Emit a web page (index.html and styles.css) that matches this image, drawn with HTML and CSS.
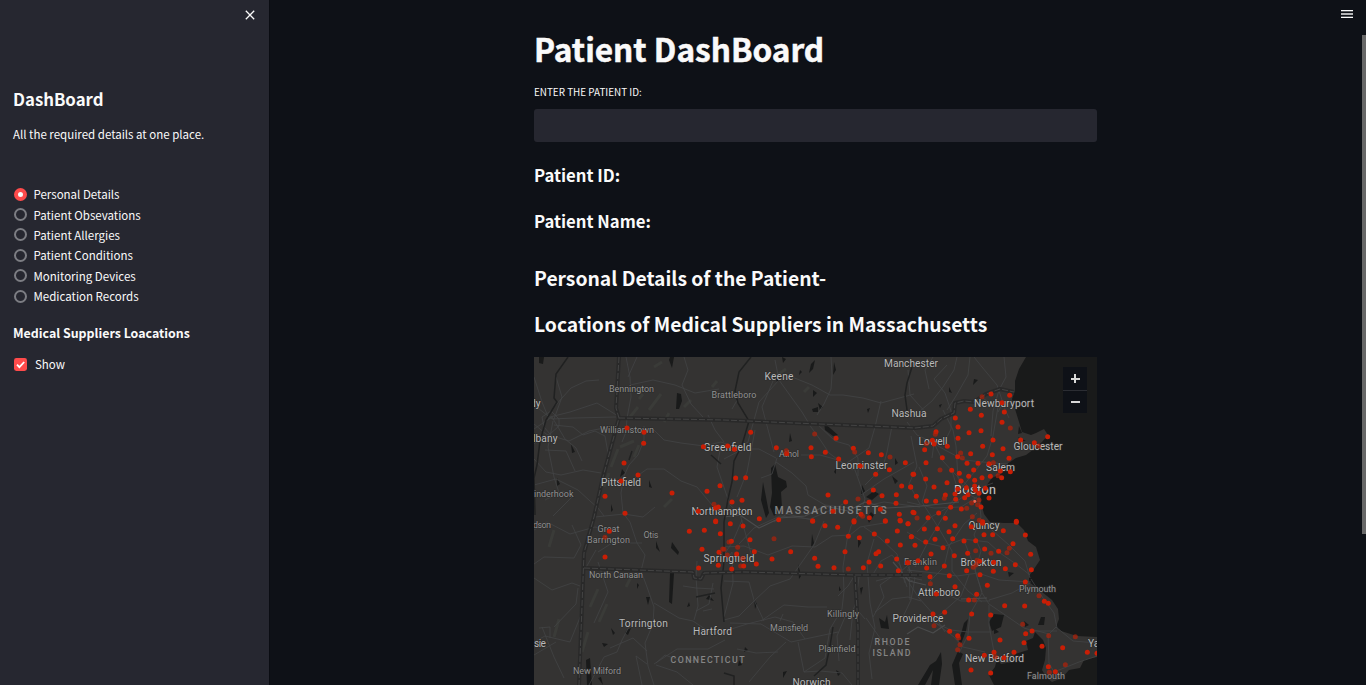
FILE: index.html
```
<!DOCTYPE html>
<html lang="en">
<head>
<meta charset="utf-8">
<title>Patient DashBoard</title>
<link rel="stylesheet" href="styles.css">
</head>
<body>
<div class="app">
  <aside class="sidebar">
    <div class="sidebar-top">
      <svg class="close" viewBox="0 0 10 10"><path d="M.8.8l8.4 8.4M9.2.8L.8 9.2"/></svg>
    </div>
    <h3 class="side-title">DashBoard</h3>
    <p class="side-text">All the required details at one place.</p>
    <div class="radios">
      <label class="radio"><i class="dot on"></i><span>Personal Details</span></label>
      <label class="radio"><i class="dot"></i><span>Patient Obsevations</span></label>
      <label class="radio"><i class="dot"></i><span>Patient Allergies</span></label>
      <label class="radio"><i class="dot"></i><span>Patient Conditions</span></label>
      <label class="radio"><i class="dot"></i><span>Monitoring Devices</span></label>
      <label class="radio"><i class="dot"></i><span>Medication Records</span></label>
    </div>
    <h5 class="side-sub">Medical Suppliers Loacations</h5>
    <label class="check"><svg viewBox="0 0 13 13"><rect width="13" height="13" rx="2.4" fill="#ff4b4b"/><path d="M3 6.6l2.4 2.5L10.2 4"/></svg><span>Show</span></label>
  </aside>
  <main class="main">
    <svg class="menu" viewBox="0 0 12 8"><path d="M0 .5h12M0 7.5h12" stroke="#fafafa"/><path d="M0 4h12" stroke="#b4b5b7" stroke-width="2"/><path d="M0 1.5h12M0 6.5h12" stroke="#55585c"/></svg>
    <div class="column">
      <h1 class="title">Patient DashBoard</h1>
      <label class="field-label">ENTER THE PATIENT ID:</label>
      <div class="field"></div>
      <h3 class="line">Patient ID:</h3>
      <h3 class="line">Patient Name:</h3>
      <h2 class="head first">Personal Details of the Patient-</h2>
      <h2 class="head second">Locations of Medical Suppliers in Massachusetts</h2>
      <div class="map">
        <svg class="map-svg" width="563" height="328" viewBox="0 0 563 328">
          <rect width="563" height="328" fill="#343332"/>
          <g class="patches">
            <path d="M105 42l4-5M96 60l8-10M115 53l12-16M86 90l14-6M90 70l9 3M77 110l7-18M120 10l8-5M100 100l5-12M130 65l5-9M70 130l5-14M178 30l5-6M240 20l12-8M270 35l5-5M56 250l8-18M65 265l8-18M48 295l6-20M92 230l6-12M20 280l5-18M15 190l5-17M130 150l8-8M150 50l7-7"/>
          </g>
          <path class="sea" d="M492 0L485 12 481 24 481 34 478 42 481 52 485 65 488 75 497 78 502 76 510 72 514 78 508 85 500 92 492 98 482 101 473 107 468 116 458 121 452 129 446 137 447 145 450 157 456 165 470 166 483 166 490 173 494 184 502 190 506 203 500 212 495 219 495 225 508 235 518 243 524 252 525 262 522 270 527 274 543 279 563 280V0z"/>
          <path class="sea" d="M563 300L550 303 546 311 535 313 528 321 518 325 512 320 508 313 511 303 512 291 509 283 501 275 499 281 492 284 494 293 481 297 478 305 467 307 463 302 461 310 455 318 460 328H563z"/>
          <path class="sea" d="M424 294l5 3-4 9 3 22h-7l-3-20zM402 304l5-9 1 12-3 21h-8l2-15-8 15h-7l12-20zM434 262l-2 12-5 13-2-3 5-18zM460 257l10 1-3 12-9 4-3-9z"/>
          <path class="water" d="M237 111l4-4 3 13 8 4 1 6-6 5 1 16-8 8-4-9 2-14zM229 125l3 15 3 16-3 5-5-18zM136 0l4 0-2 11-3-8zM143 36l4 1 1 7-3 8h-3zM5 0h5l-1 7-4-1zM242 22l4-5 2 5-5 3zM277 7l4-4-2 9-4 4zM248 0l4 2-3 4zM300 5l2 8-3 5zM266 13l2 2-3 3zM278 52l6-2 0 5-5 0zM279 33l4 3-4 4zM284 46l5 4-3 3zM290 66l6 5 8 7-5 1-8-6zM256 76l2 8-3 1zM340 134l5 3-7 6-6-3zM358 119l6 5-3 3zM328 128l3 6-4 5zM337 155l3 3-5 8-2-5zM37 87l4 8-3 1zM23 121l3 6-3 2zM115 123l3 8-3-1zM77 147l2 6-2 2zM88 112l3 4-5 4zM122 184l4 11-4-4zM138 185l7 10-1 3-7-7zM136 216l4 0-2 31-3-2zM112 240l4 0-2 8zM103 226l2 2-2 4zM93 273l4-2-3 7-3-2zM77 271l4 5-2 2zM68 286l6 1-4 3zM175 238l5 6-8-2zM52 303l4-2 2 27h-5zM64 321l3-1 2 8zM220 242l3 5-2 5zM264 207l3 12-2 3zM278 177l2 9-3 5zM345 261l6 4 2-7 2 14-8-1zM326 231l3-1-2 8zM305 229l2 4-2 1zM302 313l5 3-3 3zM238 298l2 5zM324 178l3 8-3 5zM415 30l3 6-3-1zM440 22l4 1-5 5zM405 48l3-1-2 4zM485 69l3 7-4 1zM484 80l8 4-5 0zM507 260l4 0-1 8-6 0zM490 264l5 4-4 2zM474 215l6 1-5 4zM333 52l3-1-2 5zM361 101l3 5-3 2zM300 115l2-4 0 6zM211 290l3 3-4 2zM249 315l4-1-4 7zM205 303l3 5-4 1zM155 245l-2 5 3-1zM460 271l5 4-5 2z"/>
          <path class="roads" d="M20 50L37 31 52 24 65 23M20 62L28 40 22 20M0 48L18 62 40 61 82 60M0 72L18 60 31 82 42 91 48 104M0 67L12 77 35 84 55 74 75 70M15 62L8 45 0 20M19 64L14 90 20 120 26 139M16 60L36 55 63 46 84 59M25 69L16 77 10 70 8 60 17 54 25 62zM9 75L0 87M20 68L39 70 49 78 61 74 71 79 74 96 71 117M0 102L12 115 27 118 49 113 67 116M0 128L22 122 44 133 56 144 64 151 70 159M11 93L32 94 41 114M19 159L38 140 29 134 11 143M92 0L96 20 97 40 93 61 92 75 88 85M96 28L119 23 141 28 161 36 185 32M94 20L103 0M110 69L110 83 104 98 95 108 90 119 87 136 89 156 96 165 103 186 111 198 107 214 113 230 120 250 119 267 111 286 114 309 120 328M120 73L130 83 147 86 170 89 187 85 203 91 214 85 217 74 225 45 245 23 241 3M95 125L113 112 130 112 147 124 163 130 178 148 190 158M150 0L154 13 148 28 157 47 169 60M0 173L13 165 36 177 61 170 84 175M61 160L90 157 109 160 121 150M64 195L78 186 108 186M38 168L47 188 40 201 10 200 0 207M0 221L18 233 38 226 46 229M47 258L36 285 11 279 0 285M8 270L20 300 30 321M0 298L22 285M5 271L16 270 16 281M44 231L42 247 20 270M50 214L62 193M64 205L74 235 60 266M120 246L145 261 159 264 177 276 193 276M118 267L98 264 88 283 83 295 70 300 55 328M113 294L99 281 76 291M113 307L102 299 108 328M120 307L143 292 174 292 191 283M122 308L143 315 159 328M122 306L131 298 150 305 166 302M163 204L162 220 164 249 160 263M149 229L162 231 180 232M179 226L175 247 162 254M169 254L178 252M190 207L198 195 199 226 190 260M187 88L183 110 196 148 206 157 218 200M221 73L213 115 203 140M190 85L181 73 174 58M198 52L205 40M239 24L228 50 240 95M208 163L199 184 190 198M190 224L215 225 220 243 230 264M190 263L205 259 221 243 236 229 256 222 280 188 290 164M191 274L213 267 241 260 259 265 271 282M196 266L227 267 257 285 304 275M190 190L210 189 234 198 258 189 281 190 298 179 316 178 326 170 350 166M205 187L220 171 246 159 276 162 297 153 309 147M240 165L253 157 278 163M245 23L255 37 268 55 277 70 285 81 295 96 303 102 319 113M245 23L258 20 278 28 296 38 309 38 329 41 347 46 380 37M297 0L298 18 297 32 290 47 283 58M281 65L301 84 315 88 324 101 324 119M347 44L341 70 335 91 310 108M374 13L376 38 393 57M358 69L353 95 350 106 339 120 331 128M190 102L209 92 225 92 242 101M243 101L238 117 227 121M242 105L258 116 272 129 274 138 291 148 316 151M267 98L286 98 304 103 321 113 326 127 331 142 327 154 317 169 313 183 309 210 310 234 308 252 296 272 291 301 270 315M327 138L350 122 380 105M327 150L350 145 386 150M386 54L398 44 409 30 420 13 423 0M413 8L400 22 411 36 417 54 417 72 412 82M436 0L434 18 422 39 413 53M440 0L448 10 463 28 471 52 475 61M399 0L391 13 395 32M470 0L472 20 465 33 459 54 457 79M373 65L383 78 400 86 398 101M450 42L464 50 459 79 453 99 441 114 426 133M470 44L464 55M409 53L419 73 422 89 424 121 434 138M400 86L409 104 421 117 434 129M399 86L411 93 430 103 449 105 474 107M377 79L383 109 375 127 386 147M385 110L393 129 388 145M373 145L400 151 427 150 443 140M425 136L413 151 397 160 383 175M443 142L423 130 417 111M445 142L447 160 440 178 447 194 441 214 448 235M447 162L459 174 475 188 491 204 496 221M459 126L437 134 415 150 395 183 381 210M373 175L389 185 409 190 429 182 454 185 466 196 482 207 496 218M388 145L404 170 418 194 418 214 434 234 448 245M443 156L430 167 415 189 410 210 396 224M373 213L401 216 423 219 444 216 465 223 497 225M429 181L440 209 448 236 455 247 477 262 490 271 500 274 523 274M496 226L478 236 455 243M455 248L455 268 460 295M456 244L427 244 412 237M448 236L436 257 434 278 425 296M497 222L509 241 520 256 523 271M500 273L515 277 522 270 539 284 563 286M514 276L515 306 520 315 545 305 563 299M399 265L417 273 434 275 457 275M399 264L420 280 429 290 451 295M400 263L427 239 435 218M375 226L385 241 400 258 411 275M341 255L358 242 374 240 387 244M374 210L381 221 377 243 366 266M339 260L350 240 346 228 360 218 379 224M316 283L319 253 324 241M304 239L314 229 319 221M311 260L303 279 305 304M227 264L250 248 274 250 293 250M246 264L249 257M252 285L236 300 215 325M264 285L270 315 286 314 308 316 318 328M203 292L222 296 244 295M331 262L321 250 325 220M332 261L346 281 360 292M338 219L347 204 358 198 366 208 373 230M342 224L365 218 388 223M375 202L376 243M379 204L366 215 352 220M340 182L333 206 336 246 341 271 335 296 338 322M330 170L346 181 363 197 371 226"/>
          <path class="roads major" d="M190 160L206 158 225 171 246 161 271 159 291 149 314 154 331 145 353 151 388 149 425 145M373 277L384 270 399 276 411 268M427 242L453 241M359 205L375 224 392 228"/>
          <path class="rivers" d="M34 0L22 17 20 41 23 45 12 63 6 84 3 108 0 121 1 158M217 0L205 15 201 34 204 46 215 64 208 88 200 104 198 125 194 142 190 165 190 205 187 231 190 265M378 10L373 26 371 38 374 60M162 240L181 236M299 270L296 289 292 308 280 319M190 316L200 319 200 328M98 94L95 103M177 98L187 107"/>
          <g class="border">
            <path d="M85 0L82 51 85 61 69 120 60 160 50 196 45 328M85 61L190 63 260 66 335 69 381 71 399 69 407 62 420 56 421 46 430 44 440 45 452 37 466 32 480 35M50 211L130 214 159 215 160 221 167 222 170 216 210 215 321 218 388 218M321 219L324 270 324 328"/>
            <path class="inner" d="M85 0L82 51 85 61 69 120 60 160 50 196 45 328M85 61L190 63 260 66 335 69 381 71 399 69 407 62 420 56 421 46 430 44 440 45 452 37 466 32 480 35M50 211L130 214 159 215 160 221 167 222 170 216 210 215 321 218 388 218M321 219L324 270 324 328"/>
          </g>
          <g class="names">
            <text x="350" y="9.5" textLength="54">Manchester</text>
            <text x="230.500" y="23" textLength="29">Keene</text>
            <text x="357.500" y="59.500" textLength="35">Nashua</text>
            <text x="440" y="49.500" textLength="60">Newburyport</text>
            <text x="-4" y="49.500">dy</text>
            <text x="-1" y="85" textLength="24.500">lbany</text>
            <text x="169.500" y="94" textLength="48">Greenfield</text>
            <text x="384.500" y="88" textLength="29">Lowell</text>
            <text x="479.500" y="92.500" textLength="49">Gloucester</text>
            <text x="301.500" y="112" textLength="52">Leominster</text>
            <text x="452" y="113.500" textLength="29">Salem</text>
            <text x="67" y="128.500" textLength="40">Pittsfield</text>
            <text x="157.500" y="157.500" textLength="61">Northampton</text>
            <text x="434.500" y="172" textLength="31">Quincy</text>
            <text x="169.500" y="204.500" textLength="51">Springfield</text>
            <text x="426.500" y="208.500" textLength="41">Brockton</text>
            <text x="384" y="238.500" textLength="42">Attleboro</text>
            <text x="358.500" y="264.500" textLength="51">Providence</text>
            <text x="85" y="269.500" textLength="49">Torrington</text>
            <text x="159" y="277.500" textLength="39">Hartford</text>
            <text x="431" y="305" textLength="59">New Bedford</text>
            <text x="258.500" y="328.500" textLength="38">Norwich</text>
            <text x="0" y="290" textLength="12">sie</text>
            <text x="554" y="290">Ya</text>
            <text x="420" y="137" class="big" textLength="42">Boston</text>
          </g>
          <g class="names small">
            <text x="75" y="34.500" textLength="45">Bennington</text>
            <text x="177.500" y="40.500" textLength="45">Brattleboro</text>
            <text x="66" y="76" textLength="54">Williamstown</text>
            <text x="245" y="99.500" textLength="20">Athol</text>
            <text x="0" y="140" textLength="39.500">inderhook</text>
            <text x="-1" y="171" textLength="18">dson</text>
            <text x="63.500" y="174.500" textLength="22">Great</text>
            <text x="53" y="185.500" textLength="43">Barrington</text>
            <text x="109.500" y="180.500" textLength="15">Otis</text>
            <text x="55" y="220.500" textLength="54">North Canaan</text>
            <text x="370" y="207.500" textLength="33">Franklin</text>
            <text x="485" y="234.500" textLength="37">Plymouth</text>
            <text x="293" y="259.500" textLength="32">Killingly</text>
            <text x="236" y="273.500" textLength="38">Mansfield</text>
            <text x="284.500" y="295" textLength="37">Plainfield</text>
            <text x="39" y="316.500" textLength="48">New Milford</text>
            <text x="493" y="322" textLength="38">Falmouth</text>
          </g>
          <g class="states">
            <text x="240.500" y="156.500" textLength="112" font-size="10.500">MASSACHUSETTS</text>
            <text x="136.500" y="306" textLength="74">CONNECTICUT</text>
            <text x="340.500" y="287.500" textLength="35">RHODE</text>
            <text x="338.500" y="298.500" textLength="38">ISLAND</text>
          </g>
          <g id="pins"></g>
        </svg>
        <div class="zoom"><b class="plus"></b><b class="minus"></b></div>
      </div>
    </div>
    <div class="scrollbar"></div>
  </main>
</div>
<script src="map.js"></script>
</body>
</html>
```
FILE: styles.css
```
* { box-sizing: border-box; }
body {
  margin: 0;
  background: #0e1117;
  color: #fafafa;
  font-family: "Noto Sans CJK SC", "Noto Sans", sans-serif;
  overflow: hidden;
}
h1, h2, h3, h5, p { margin: 0; white-space: nowrap; }
.app { display: flex; height: 685px; }
.sidebar {
  width: 269px;
  flex: none;
  background: #262730;
  padding: 0 13px;
  font-size: 11.5px;
}
.sidebar-top { display: flex; justify-content: flex-end; height: 88px; padding: 10px 1px 0 0; }
.close { width: 10px; height: 10px; stroke: #fafafa; stroke-width: 1.3; fill: none; }
.side-title { font-size: 16.8px; line-height: 22px; height: 37px; }
.side-text { line-height: 18px; height: 59px; }
.radios { display: flex; flex-direction: column; }
.radio { display: flex; align-items: center; height: 20.4px; gap: 6.5px; white-space: nowrap; padding-left: 1px; }
.dot { width: 13px; height: 13px; border-radius: 50%; border: 2px solid #7c7d83; }
.dot.on { border: 4px solid #ff4b4b; background: #fafafa; }
.side-sub { font-size: 12.4px; line-height: 20px; margin-top: 17px; }
.check { display: flex; align-items: center; gap: 8px; height: 20px; margin-top: 11px; padding-left: 1px; }
.check svg { width: 13px; height: 13px; }
.check path { fill: none; stroke: #fff; stroke-width: 1.8; }
.main { flex: 1; position: relative; padding: 29px 0 0 265px; box-shadow: inset 1px 0 #0a0c12; }
.menu { position: absolute; right: 13px; top: 10px; width: 12px; height: 8px; }
.scrollbar { position: absolute; right: 0; top: 35px; width: 4px; height: 499px; background: #686868; }
.column { width: 563px; }
.title { font-size: 31.6px; line-height: 38px; height: 54px; -webkit-text-stroke: .5px #fafafa; }
.field-label { display: block; font-size: 9.9px; line-height: 18px; height: 26px; }
.field { height: 33px; border-radius: 3px; background: #262730; }
.line { font-size: 16.7px; line-height: 26px; margin-top: 20px; }
.head { font-size: 19.3px; line-height: 30px; }
.first { margin-top: 29px; }
.second { margin-top: 16px; }
.map { position: relative; height: 328px; margin-top: 18px; overflow: hidden; }
.map-svg { display: block; }
.patches { fill: none; stroke: #3a3b38; stroke-width: 3; }
.sea, .water { fill: #191a1a; }
.roads { fill: none; stroke: #434445; stroke-width: .8; stroke-linejoin: round; }
.major { stroke: #4a4b4c; stroke-width: 1.2; }
.rivers { fill: none; stroke: #202121; stroke-width: 1.5; }
.border path { fill: none; stroke: #292929; stroke-width: 4; stroke-linejoin: round; }
.border .inner { stroke: #4a4a4a; stroke-width: .8; stroke-dasharray: 6 2; }
.names { font: 10.2px Roboto, sans-serif; fill: #b9b9b9; stroke: #2b2b2b; stroke-width: 1.2px; paint-order: stroke; }
.names.small { font-size: 9px; fill: #919191; }
.names .big { font-size: 12.5px; fill: #c8c8c8; }
.states { font: 500 8.8px Roboto, sans-serif; fill: #858585; }
.pin { fill: #c91e05; }
.pin.faded { fill: #b72108; opacity: .68; }
.pin.hub { fill: #e8644e; }
.zoom { position: absolute; right: 10px; top: 10px; width: 24px; height: 46px; background: #0e1117; display: grid; grid-template-rows: 23px 22px; row-gap: 1px; place-items: center; }
.zoom::before { content: ""; position: absolute; top: 23px; width: 24px; height: 1px; background: #2b2d33; }
.plus, .minus { display: block; width: 9px; height: 9px; background: linear-gradient(#d8d8d8, #d8d8d8) center / 9px 2px no-repeat; }
.plus { background: linear-gradient(#d8d8d8, #d8d8d8) center / 9px 2px no-repeat, linear-gradient(#d8d8d8, #d8d8d8) center / 2px 9px no-repeat; }
```
FILE: map.js
```
// Supplier positions per map tile, in thirds of a pixel; "f" marks a faded pin, "h" the hub.
const tiles = [
  [0, 0, "279,213 330,226 329,259 508,269 270,318 312,354 261,372 213,418 414,408 519,403 558,386 540,442f 545,453 553,450 493,463 273,469 545,492"],
  [190, 0, "80,226 272,231f 336,244 11,267 31,277 157,272 188,290 187,281f 261,272 262,299 304,286 388,274 392,285f 433,287 472,293 498,300f 344,306 409,327 544,317 496,338 455,352 35,363 65,362 533,387 560,390 567,352 448,399 474,416 312,414 517,413 24,435 54,430 365,435 402,426f 435,436 516,439 327,463 469,457 411,472 416,478f 436,482 526,472 567,466 106,485 164,488 266,491 390,491 484,491 528,490"],
  [373, 0, "252,111 225,119f 308,115 285,137 190,157 292,165 223,175 145,183 285,196 153,210 310,213f 87,224 222,221 186,227 85,232f 153,244 422,239 341,249 76,250 258,249 382,257 395,267f 121,268 58,260f 81,261 227,268 288,275 53,278 106,302 191,290 161,288f 152,299 166,303f 256,293 306,304 57,317 180,319 213,319 246,320 259,317f 20,352 99,339f 134,340 157,349 200,339 280,342 310,344 273,356f 284,362 56,366 185,358 225,362 250,358 162,372 203,370 120,377 11,390 81,390 203,387 178,392 152,396 235,394 28,418 115,414 144,411 183,413 173,422 216,409 205,400 58,432 86,433 112,424f 146,427 246,423 203,433h 216,429f 194,438f 212,443f 222,450 131,451 163,456 179,454f 21,467 95,468 30,483f 63,482 115,484 196,479f 217,490f 227,494 328,493"],
  [0, 163, "545,5 226,34 213,52f 466,34 511,31 559,41 213,111 504,88 555,97 566,87f 553,136 494,144"],
  [190, 163, "19,11 57,18 22,64 15,66f 78,59 150,56f 41,82f 91,95 38,102 10,105f 0,88f 56,115f 50,138f 59,138 97,132 144,117 200,95 23,147 266,4 303,17 341,22 390,6 373,49 406,53 484,4 529,3 552,11 520,33 451,42 562,50 490,63 529,75 363,95 464,95 456,101 272,115 282,139 330,143 373,147f 435,126 418,143 470,138 518,117 550,128 523,152"],
  [373, 163, "3,11 52,27 91,26 144,17 193,20 227,10 328,7 13,50 126,35 137,56 231,44 257,44 289,32 355,45 24,76 56,66 84,58 171,63 206,62 108,83 318,71 307,85f 300,98f 72,102 142,107 182,100 206,92f 233,87 252,100f 275,94 371,103 3,128 33,122 59,144 112,138 218,124 210,121f 260,127 207,134f 199,142f 325,134 295,146 373,149 179,152 259,154 69,170 127,167 219,164 70,191f 144,200 241,196 355,186 88,222 209,223 396,227f 185,240 202,240f 412,244 424,250 293,257 353,258 78,282 113,277 194,282 251,285 81,317f 347,313f 128,334 375,333 356,341 425,347f 505,350f 152,347 155,354f 186,355 279,360 351,368 159,374f 152,389f 405,379 467,383 232,406 261,397 265,410f 291,413 321,397 541,397 570,400 424,440 475,434f 192,450 251,459 427,457f 445,455"]
];
const layer = document.getElementById("pins");
for (const [dx, dy, list] of tiles) {
  for (const item of list.split(" ")) {
    const [x, y] = item.split(",").map(parseFloat);
    const c = document.createElementNS("http://www.w3.org/2000/svg", "circle");
    c.setAttribute("cx", dx + x / 3);
    c.setAttribute("cy", dy + y / 3);
    c.setAttribute("r", item.endsWith("h") ? 1.6 : 2.5);
    c.setAttribute("class", "pin" + (item.endsWith("f") ? " faded" : item.endsWith("h") ? " hub" : ""));
    layer.appendChild(c);
  }
}
```
